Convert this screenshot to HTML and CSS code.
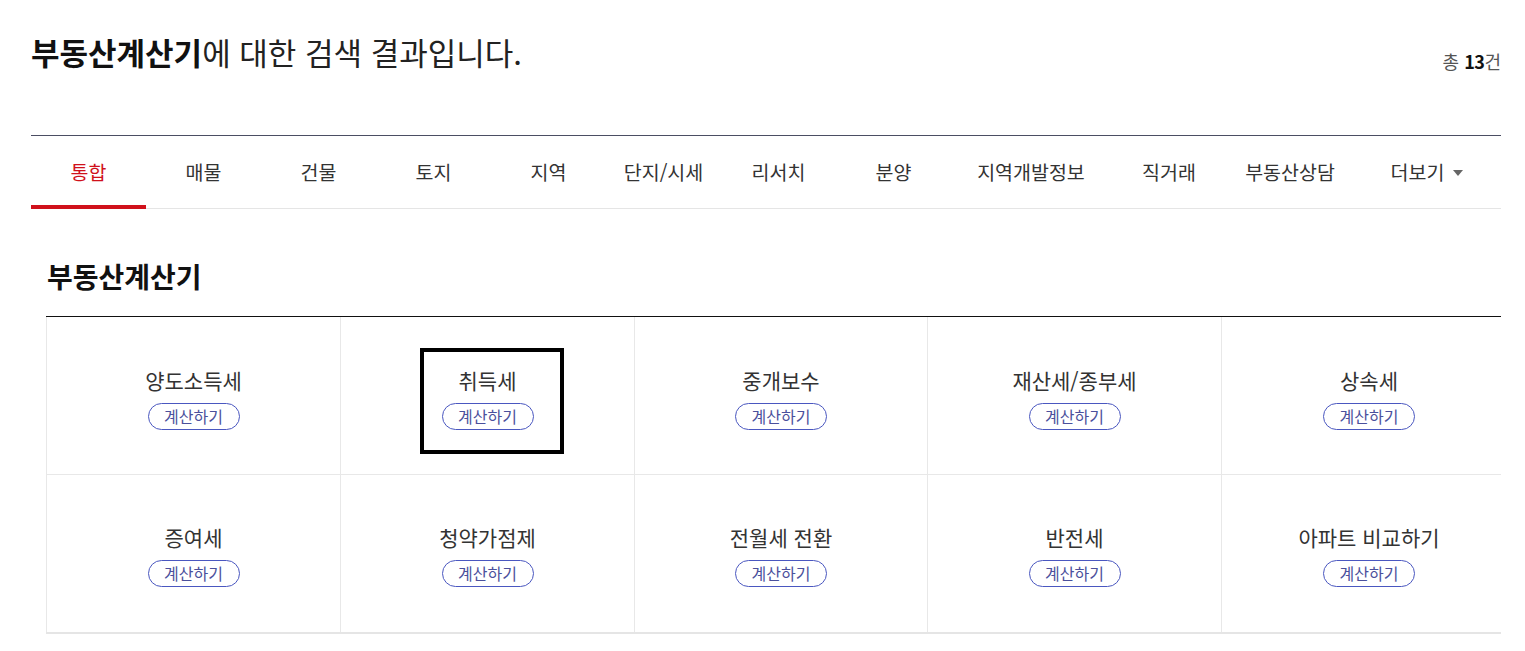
FILE: index.html
```html
<!DOCTYPE html>
<html lang="ko">
<head>
<meta charset="utf-8">
<title>부동산계산기 검색 결과</title>
<link rel="stylesheet" href="styles.css">
</head>
<body>
<div class="page">
  <div class="result-head">
    <h1 class="result-title"><strong>부동산계산기</strong>에 대한 검색 결과입니다.</h1>
    <p class="result-count">총 <b>13</b>건</p>
  </div>

  <nav class="tabs">
    <a class="tab tab-active" href="#">통합</a>
    <a class="tab" href="#">매물</a>
    <a class="tab" href="#">건물</a>
    <a class="tab" href="#">토지</a>
    <a class="tab" href="#">지역</a>
    <a class="tab" href="#">단지/시세</a>
    <a class="tab" href="#">리서치</a>
    <a class="tab" href="#">분양</a>
    <a class="tab tab-w160" href="#">지역개발정보</a>
    <a class="tab tab-w116" href="#">직거래</a>
    <a class="tab tab-w126" href="#">부동산상담</a>
    <a class="tab tab-more" href="#">더보기<span class="caret"></span></a>
  </nav>

  <section class="calc">
    <h2 class="calc-title">부동산계산기</h2>
    <ul class="calc-grid">
      <li class="calc-cell"><a class="calc-link" href="#"><span class="calc-name">양도소득세</span><span class="calc-btn">계산하기</span></a></li>
      <li class="calc-cell"><a class="calc-link calc-focus" href="#"><span class="calc-name">취득세</span><span class="calc-btn">계산하기</span></a></li>
      <li class="calc-cell"><a class="calc-link" href="#"><span class="calc-name">중개보수</span><span class="calc-btn">계산하기</span></a></li>
      <li class="calc-cell"><a class="calc-link" href="#"><span class="calc-name">재산세/종부세</span><span class="calc-btn">계산하기</span></a></li>
      <li class="calc-cell"><a class="calc-link" href="#"><span class="calc-name">상속세</span><span class="calc-btn">계산하기</span></a></li>
      <li class="calc-cell"><a class="calc-link" href="#"><span class="calc-name">증여세</span><span class="calc-btn">계산하기</span></a></li>
      <li class="calc-cell"><a class="calc-link" href="#"><span class="calc-name">청약가점제</span><span class="calc-btn">계산하기</span></a></li>
      <li class="calc-cell"><a class="calc-link" href="#"><span class="calc-name">전월세 전환</span><span class="calc-btn">계산하기</span></a></li>
      <li class="calc-cell"><a class="calc-link" href="#"><span class="calc-name">반전세</span><span class="calc-btn">계산하기</span></a></li>
      <li class="calc-cell"><a class="calc-link" href="#"><span class="calc-name">아파트 비교하기</span><span class="calc-btn">계산하기</span></a></li>
    </ul>
  </section>
</div>
</body>
</html>
```

FILE: styles.css
```css
* { box-sizing: border-box; }
html, body { margin: 0; padding: 0; background: #fff; }
body {
  font-family: "Noto Sans CJK KR", "Noto Sans", sans-serif;
  color: #333;
}
a { text-decoration: none; color: inherit; }

.page {
  width: 1470px;
  margin-left: 31px;
  overflow: hidden;
}

.result-head {
  display: flex;
  justify-content: space-between;
  align-items: flex-start;
  height: 135px;
}
.result-title {
  margin: 31px 0 0;
  font-size: 31px;
  font-weight: 400;
  color: #222;
  line-height: 42px;
}
.result-title strong { font-weight: 700; color: #111; }
.result-count {
  margin: 48px 0 0;
  font-size: 18px;
  line-height: 26px;
  color: #555;
}
.result-count b { color: #111; font-weight: 700; letter-spacing: -0.5px; }

.tabs {
  display: flex;
  border-top: 1px solid #4b4e63;
  border-bottom: 1px solid #e5e5e5;
  height: 74px;
}
.tab {
  width: 115px;
  flex: none;
  display: flex;
  align-items: center;
  justify-content: center;
  font-size: 19.5px;
  color: #333;
  padding-bottom: 2px;
  border-bottom: 4px solid transparent;
  margin-bottom: -1px;
  padding-top: 4px;
}
.tab-active {
  color: #d0111b;
  border-bottom-color: #d0111b;
}
.tab-w160 { width: 160px; }
.tab-w116 { width: 116px; }
.tab-w126 { width: 126px; }
.tab-more { flex: 1; width: auto; }
.caret {
  display: inline-block;
  width: 0; height: 0;
  border-left: 5px solid transparent;
  border-right: 5px solid transparent;
  border-top: 6px solid #666;
  margin-left: 9px;
  margin-top: 3px;
}

.calc { margin-left: 15px; }
.calc-title {
  margin: 0;
  padding: 47px 0 0 1px;
  height: 107px;
  font-size: 28px;
  font-weight: 700;
  color: #111;
  line-height: 40px;
}
.calc-grid {
  list-style: none;
  margin: 0;
  padding: 0;
  width: 1470px;
  display: grid;
  grid-template-columns: 294px 294px 293px 294px 295px;
  border-top: 1px solid #111;
  border-bottom: 2px solid #e5e5e5;
}
.calc-cell {
  height: 158px;
  border-left: 1px solid #e8e8e8;
  border-bottom: 1px solid #e8e8e8;
  display: flex;
  align-items: center;
  justify-content: center;
  padding-top: 11px;
}
.calc-cell:nth-child(n+6) { border-bottom: none; height: 157px; padding-top: 9px; }
.calc-link {
  display: flex;
  flex-direction: column;
  align-items: center;
  justify-content: center;
  min-width: 136px;
  height: 98px;
  gap: 9px;
  padding-bottom: 6px;
}
.calc-focus {
  outline: 4px solid #000;
  margin-left: 8px;
  padding-right: 8px;
}
.calc-name {
  font-size: 21px;
  line-height: 28px;
  color: #333;
}
.calc-btn {
  display: block;
  width: 92px;
  height: 27px;
  border: 1px solid #4a57c0;
  border-radius: 14px;
  font-size: 16px;
  line-height: 25px;
  text-align: center;
  color: #4b509c;
}
```
